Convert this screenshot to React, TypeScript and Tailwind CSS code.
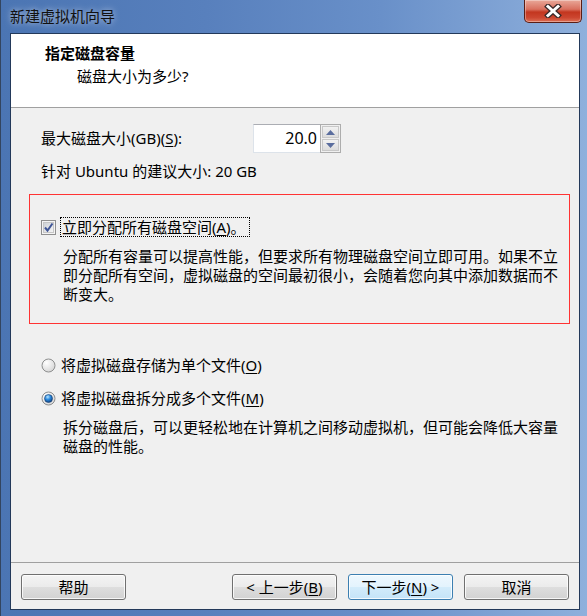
import React from "react";
import clsx from "clsx";

const FONT = "font-['Noto_Sans','Noto_Sans_CJK_SC',sans-serif]";

const CloseButton = () => (
  <div className="w-[58px] h-[23px] rounded-b-[5px] border border-t-0 border-[#5a1d14] bg-[linear-gradient(#e9a899_0%,#d9705f_42%,#c3361f_55%,#cc4630_80%,#dd6f55_100%)] shadow-[inset_0_0_0_1px_rgba(255,255,255,0.35)] flex items-center justify-center">
    <svg width="18" height="14" viewBox="0 0 18 14">
      <path d="M4 2.5 L14 11.5 M14 2.5 L4 11.5" stroke="#3b2a2a" strokeWidth="5.5" strokeLinecap="square" />
      <path d="M4 2.5 L14 11.5 M14 2.5 L4 11.5" stroke="#ffffff" strokeWidth="3" strokeLinecap="square" />
    </svg>
  </div>
);

const Checkbox = () => (
  <svg width="15" height="15" viewBox="0 0 15 15">
    <defs>
      <linearGradient id="cbg" x1="0" y1="0" x2="1" y2="1">
        <stop offset="0" stopColor="#cbcfd5" />
        <stop offset="1" stopColor="#f6f6f6" />
      </linearGradient>
    </defs>
    <rect x="0.5" y="0.5" width="14" height="14" fill="#f4f4f4" stroke="#8f8f8f" />
    <rect x="2.5" y="2.5" width="10" height="10" fill="url(#cbg)" stroke="#c6c6c6" />
    <path d="M4 7.5 L6.5 10.5 L11.5 3.5" stroke="#3f5596" strokeWidth="2" fill="none" />
  </svg>
);

const Radio = ({ checked }: { checked?: boolean }) => (
  <svg width="15" height="15" viewBox="0 0 15 15">
    <defs>
      <radialGradient id="rbg" cx="0.35" cy="0.3" r="0.8">
        <stop offset="0" stopColor="#ffffff" />
        <stop offset="1" stopColor="#d3d3d3" />
      </radialGradient>
      <radialGradient id="rdot" cx="0.4" cy="0.3" r="0.75">
        <stop offset="0" stopColor="#b9e6ff" />
        <stop offset="0.45" stopColor="#2b8be0" />
        <stop offset="1" stopColor="#0b3b78" />
      </radialGradient>
    </defs>
    <circle cx="7.5" cy="7.5" r="6.5" fill="url(#rbg)" stroke="#8e8f8f" />
    {checked && <circle cx="7.5" cy="7.5" r="4" fill="url(#rdot)" stroke="#1b3e6e" strokeWidth="0.6" />}
  </svg>
);

const Button = ({ children, primary }: { children: React.ReactNode; primary?: boolean }) => (
  <div
    className={clsx(
      "w-[105px] h-[26px] rounded-[3px] border flex items-center justify-center text-[15px] leading-[20px] text-black shadow-[inset_0_0_0_1px_rgba(255,255,255,0.8)]",
      primary
        ? "border-[#3c7fb1] bg-[linear-gradient(#eef8fe_0%,#e3f3fd_50%,#d3ecfb_50%,#c4e4f8_100%)]"
        : "border-[#707070] bg-[linear-gradient(#f4f4f4_0%,#ebebeb_50%,#dedede_50%,#d2d2d2_100%)]"
    )}
  >
    {children}
  </div>
);

const SpinBox = () => (
  <div className="flex h-[29px]">
    <div className="w-[67px] h-full bg-white border border-[#dde3ea] border-t-[#abadb3] border-r-0 flex items-center justify-end pr-[3px] text-[16px] text-black">
      20.0
    </div>
    <div className="w-[21px] h-full border border-[#adadad] flex flex-col gap-[1px] p-[1px] bg-[#f0f0f0]">
      <div className="flex-1 bg-[linear-gradient(#f2f2f2,#dcdcdc)] border border-[#c8c8c8] flex items-center justify-center">
        <svg width="9" height="5" viewBox="0 0 9 5">
          <path d="M0 5 L4.5 0 L9 5 Z" fill="#5a6d9e" />
        </svg>
      </div>
      <div className="flex-1 bg-[linear-gradient(#f2f2f2,#dcdcdc)] border border-[#c8c8c8] flex items-center justify-center">
        <svg width="9" height="5" viewBox="0 0 9 5">
          <path d="M0 0 L9 0 L4.5 5 Z" fill="#5a6d9e" />
        </svg>
      </div>
    </div>
  </div>
);

export default function App() {
  return (
    <div
      className={clsx(
        "w-[587px] h-[616px] flex flex-col border-l border-[#33455f] bg-[linear-gradient(90deg,#4b75b3_0%,#5880bd_35%,#6990c9_65%,#8fb0dc_100%)]",
        FONT
      )}
    >
      {/* title bar */}
      <div className="h-[33px] flex items-start justify-between pl-[9px] pr-[5px]">
        <div className="pt-[6px] text-[15px] leading-[20px] text-[#111] [text-shadow:0_0_6px_rgba(255,255,255,0.7)]">
          新建虚拟机向导
        </div>
        <CloseButton />
      </div>

      {/* client area */}
      <div className="flex-1 ml-[9px] mr-[7px] mb-[6px] border border-[#23395a] bg-[#f0f0f0] flex flex-col text-black">
        <div className="h-[74px] bg-white border-b border-[#a0a0a0] pl-[34px] pt-[9px]">
          <div className="text-[15px] leading-[20px] font-bold">指定磁盘容量</div>
          <div className="mt-[3px] pl-[32px] text-[15px] leading-[20px]">磁盘大小为多少?</div>
        </div>

        <div className="pt-[16px] pl-[18px] text-[15px] leading-[19px]">
          <div className="pl-[12px] flex items-center">
            <div className="w-[212px]">
              最大磁盘大小(GB)(<u className="underline-offset-2">S</u>):
            </div>
            <SpinBox />
          </div>
          <div className="pl-[12px] mt-[9px]">针对 Ubuntu 的建议大小: 20 GB</div>

          <div className="mt-[13px] w-[541px] border border-[#ff3333] pt-[22px] pb-[19px] pl-[11px]">
            <div className="flex items-center h-[20px]">
              <Checkbox />
              <div className="ml-[4px] h-[20px] pl-[1px] pr-[3px] border border-dotted border-black flex items-center">
                立即分配所有磁盘空间(<u className="underline-offset-2">A</u>)。
              </div>
            </div>
            <div className="mt-[10px] pl-[22px]">
              分配所有容量可以提高性能，但要求所有物理磁盘空间立即可用。如果不立
              <br />
              即分配所有空间，虚拟磁盘的空间最初很小，会随着您向其中添加数据而不
              <br />
              断变大。
            </div>
          </div>

          <div className="mt-[31px] pl-[12px] flex items-center h-[20px]">
            <Radio />
            <div className="ml-[5px]">
              将虚拟磁盘存储为单个文件(<u className="underline-offset-2">O</u>)
            </div>
          </div>
          <div className="mt-[13px] pl-[12px] flex items-center h-[20px]">
            <Radio checked />
            <div className="ml-[5px]">
              将虚拟磁盘拆分成多个文件(<u className="underline-offset-2">M</u>)
            </div>
          </div>
          <div className="mt-[10px] pl-[34px]">
            拆分磁盘后，可以更轻松地在计算机之间移动虚拟机，但可能会降低大容量
            <br />
            磁盘的性能。
          </div>
        </div>

        <div className="mt-auto border-t border-[#a0a0a0] pt-[11px] pb-[9px] pl-[10px] pr-[10px] flex items-center">
          <Button>帮助</Button>
          <div className="flex-1" />
          <div className="flex gap-[11px]">
            <Button>
              &lt; 上一步(<u className="underline-offset-2">B</u>)
            </Button>
            <Button primary>
              下一步(<u className="underline-offset-2">N</u>) &gt;
            </Button>
            <Button>取消</Button>
          </div>
        </div>
      </div>
    </div>
  );
}
